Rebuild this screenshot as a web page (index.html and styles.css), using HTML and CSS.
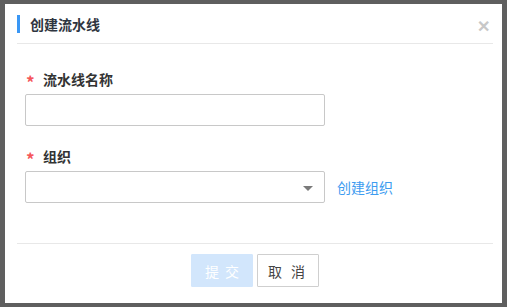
FILE: index.html
```html
<!DOCTYPE html>
<html>
<head>
<meta charset="utf-8">
<link rel="stylesheet" href="styles.css">
</head>
<body>
<div class="page">
  <div class="modal">
    <div class="header">
      <div class="title"><span class="bar"></span><span class="title-text">创建流水线</span></div>
      <span class="close">&#x2715;</span>
    </div>
    <div class="body">
      <div class="field">
        <div class="label"><span class="star">*</span>流水线名称</div>
        <div class="input"></div>
      </div>
      <div class="field field2">
        <div class="label"><span class="star">*</span>组织</div>
        <div class="row">
          <div class="input select"><span class="caret"></span></div>
          <a class="link">创建组织</a>
        </div>
      </div>
    </div>
    <div class="footer">
      <button class="btn primary">提交</button>
      <button class="btn cancel">取消</button>
    </div>
  </div>
</div>
</body>
</html>
```

FILE: styles.css
```css
html, body {
  margin: 0;
  padding: 0;
  background: #5f5f5f;
  font-family: "Noto Sans CJK SC", "Noto Sans", sans-serif;
  width: 507px;
  height: 307px;
  overflow: hidden;
}
.page {
  padding: 4px 0 0 5px;
}
.modal {
  width: 497px;
  height: 299px;
  background: #fff;
  display: flex;
  flex-direction: column;
}
.header {
  height: 39px;
  margin: 0 9px 0 12px;
  border-bottom: 1px solid #e8e8e8;
  display: flex;
  align-items: center;
  justify-content: space-between;
}
.title {
  display: flex;
  align-items: center;
}
.bar {
  width: 3px;
  height: 18px;
  background: #3a97f5;
  margin-right: 10px;
}
.title-text {
  font-size: 14px;
  font-weight: 700;
  color: #2f3540;
  line-height: 20px;
}
.close {
  color: #c8c8c8;
  font-size: 16px;
  font-weight: 700;
  margin-right: 3px;
  margin-top: 2px;
}
.body {
  padding: 25px 0 0 20px;
  height: 174px;
}
.label {
  display: flex;
  align-items: center;
  font-size: 14px;
  font-weight: 700;
  color: #333;
  height: 20px;
  margin-bottom: 5px;
}
.star {
  color: #f5565a;
  font-size: 17px;
  font-weight: 700;
  width: 17px;
  margin-left: 1px;
  padding-top: 5px;
}
.input {
  width: 298px;
  height: 30px;
  border: 1px solid #c8c8c8;
  border-radius: 2px;
  background: #fff;
}
.field2 {
  margin-top: 20px;
}
.row {
  display: flex;
  align-items: center;
}
.select {
  position: relative;
}
.caret {
  position: absolute;
  right: 11px;
  top: 14px;
  width: 0;
  height: 0;
  border-left: 5px solid transparent;
  border-right: 5px solid transparent;
  border-top: 5px solid #7a7a7a;
}
.link {
  color: #3d9cf0;
  font-size: 14px;
  margin-left: 12px;
}
.footer {
  margin: 0 9px 0 12px;
  border-top: 1px solid #e8e8e8;
  display: flex;
  justify-content: center;
  gap: 4px;
  padding-top: 10px;
}
.btn {
  width: 62px;
  height: 33px;
  border: 1px solid #cfcfcf;
  background: #fff;
  color: #444;
  font-family: "Noto Sans CJK SC", sans-serif;
  font-size: 14px;
  letter-spacing: 6px;
  padding: 0 0 0 6px;
  border-radius: 1px;
  white-space: nowrap;
}
.btn.primary {
  background: #d2e6fc;
  border-color: #d2e6fc;
  color: #fff;
}
.btn.cancel {
  letter-spacing: 9px;
  padding: 0 0 0 6px;
}
```
